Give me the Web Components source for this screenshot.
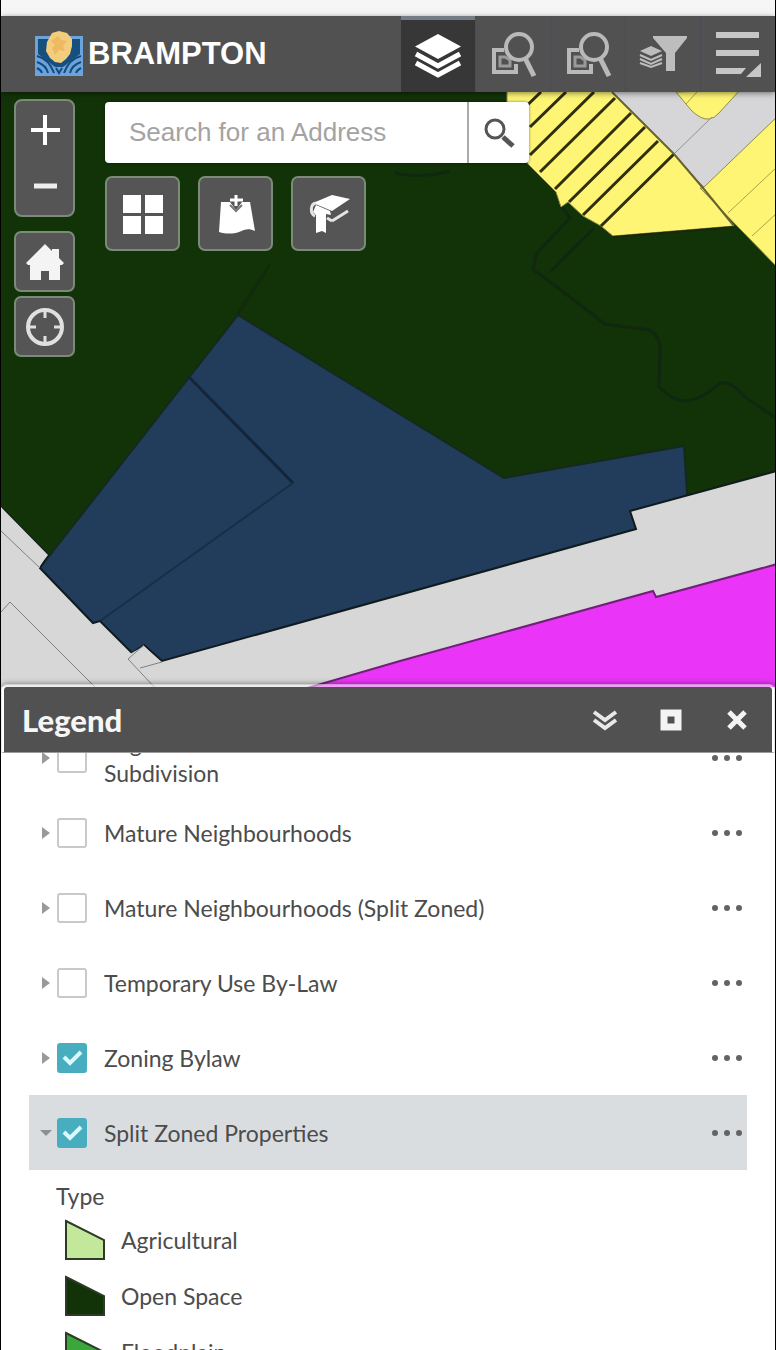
<!DOCTYPE html>
<html lang="en">
<head>
<meta charset="utf-8">
<meta name="viewport" content="width=device-width, initial-scale=1">
<title>Brampton Zoning Map</title>
<style>
  body {
    margin: 0;
    background: #fff;
    font-family: Lato, "Open Sans", sans-serif;
    font-size: 23px;
    color: #4c4c4c;
  }
</style>
</head>
<body>
<map-app>
  <app-header slot="header">
    <header-tool icon="layers" label="Legend" active></header-tool>
    <header-tool icon="find" label="Property search"></header-tool>
    <header-tool icon="find" label="Zoning search"></header-tool>
    <header-tool icon="filter" label="Filter"></header-tool>
    <header-tool icon="menu" label="More"></header-tool>
  </app-header>
  <map-view slot="map">
    <map-button slot="nav" icon="home" label="Home"></map-button>
    <map-button slot="nav" icon="locate" label="My location"></map-button>
    <address-search slot="search"></address-search>
    <map-button slot="tools" size="large" icon="grid" label="Basemaps"></map-button>
    <map-button slot="tools" size="large" icon="share" label="Add data"></map-button>
    <map-button slot="tools" size="large" icon="book" label="Bookmarks"></map-button>
  </map-view>
  <legend-panel slot="panel" heading="Legend">
    <layer-row>Registered Plan of<br>Subdivision</layer-row>
    <layer-row>Mature Neighbourhoods</layer-row>
    <layer-row>Mature Neighbourhoods (Split Zoned)</layer-row>
    <layer-row>Temporary Use By-Law</layer-row>
    <layer-row checked>Zoning Bylaw</layer-row>
    <layer-row checked open>Split Zoned Properties</layer-row>
    <legend-group heading="Type">
      <legend-item color="#c3e89b">Agricultural</legend-item>
      <legend-item color="#123308">Open Space</legend-item>
      <legend-item color="#3ba73b">Floodplain</legend-item>
    </legend-group>
  </legend-panel>
</map-app>

<script>
const icons = {
  layers: `<svg width="48" height="48" viewBox="0 0 48 48"><path fill="#fff" d="M24 2 47 14.500 24 27 1 14.500z"/><path fill="none" stroke="#fff" stroke-width="5" d="M2 22 24 34 46 22M2 31 24 43 46 31"/></svg>`,
  find: `<svg width="48" height="48" viewBox="0 0 48 48" fill="none" stroke="#b9b9b9"><path stroke-width="4" d="M15 20H5v22h22v-8"/><path stroke-width="3" d="M11 27h5l5 3v6h-10z" opacity=".7"/><circle cx="30" cy="17" r="13" stroke-width="4"/><path stroke-width="5" d="M36 28 45 46"/></svg>`,
  filter: `<svg width="48" height="48" viewBox="0 0 48 48"><path fill="#bdbdbd" d="M14 6h34v2L36 23v18h-9V23L14 8z"/><path fill="#bdbdbd" d="m12 16 11 5-11 5-11-5z"/><path fill="none" stroke="#bdbdbd" stroke-width="2" d="m1 25 11 5 11-5M1 29l11 5 11-5M1 33l11 4 11-4"/></svg>`,
  menu: `<svg width="48" height="48" viewBox="0 0 48 48" fill="#c6c6c6"><path d="M2 2h43v6H2zM2 20h43v6H2zM2 38h30l-5 6H2zM47 33v14H32z"/></svg>`,
  plus: `<svg width="32" height="32" viewBox="0 0 32 32"><path stroke="#fff" stroke-width="4" d="M2 16h29M16 1v30"/></svg>`,
  minus: `<svg width="32" height="32" viewBox="0 0 32 32"><path stroke="#eee" stroke-width="5" d="M5 16h23"/></svg>`,
  home: `<svg width="40" height="40" viewBox="0 0 40 40"><path fill="#f4f4f4" d="M20 2 27 9V7h7v9l5 5-2 2h-2v15H24v-9h-8v9H5V23H3l-2-2z"/></svg>`,
  locate: `<svg width="40" height="40" viewBox="0 0 40 40" fill="none" stroke="#e0e0e0"><circle cx="20" cy="20" r="17" stroke-width="4"/><path stroke-width="3" d="M20 4v7M20 29v7M4 20h7M29 20h7"/></svg>`,
  grid: `<svg width="42" height="42" viewBox="0 0 42 42" fill="#fff"><path d="M1 2h18v18H1zM23 2h18v18H23zM1 23h18v18H1zM23 23h18v18H23z"/></svg>`,
  share: `<svg width="42" height="42" viewBox="0 0 42 42"><path fill="#fff" d="M6 9h9l6 8 6-8h8l5 29c-6-3-10-2-16 1-6 2-13 2-20 0z"/><path fill="none" stroke="#fff" stroke-width="3" d="M15 7h13M21 2v11"/><path fill="none" stroke="#777" stroke-width="2" d="m15 12 6 6 6-6"/></svg>`,
  book: `<svg width="42" height="42" viewBox="0 0 42 42"><path fill="#fff" d="M5 10 24 2l18 4-18 12z"/><path fill="none" stroke="#e4e4e4" stroke-width="3" d="M8 10c-6 1-6 11-1 13M24 28l16-10M19 25l5 3"/><path fill="#fff" d="m8 12 14 6 1 4-5-1v19l-4-2-6 2V22l-3-3z"/></svg>`,
  search: `<svg width="32" height="32" viewBox="0 0 32 32" fill="none" stroke="#555"><circle cx="12" cy="12" r="9" stroke-width="3"/><path stroke-width="5" d="m20 20 10 9"/></svg>`,
  collapse: `<svg width="26" height="22" viewBox="0 0 26 22" fill="none" stroke="#e8e8e8" stroke-width="4"><path d="m2 3 11 8 11-8M2 11l11 8 11-8"/></svg>`,
  maximize: `<svg width="22" height="22" viewBox="0 0 22 22"><path fill="none" stroke="#f4f4f4" stroke-width="7" d="M4 4h14v14H4z"/></svg>`,
  close: `<svg width="22" height="22" viewBox="0 0 22 22"><path stroke="#f4f4f4" stroke-width="5" d="m3 3 16 16M19 3 3 19"/></svg>`,
  right: `<svg width="10" height="14" viewBox="0 0 10 14"><path fill="#999" d="m1 1 8 6-8 6z"/></svg>`,
  down: `<svg width="12" height="8" viewBox="0 0 12 8"><path fill="#8d9092" d="M0 1h12L6 7z"/></svg>`,
  dots: `<svg width="32" height="8" viewBox="0 0 32 8" fill="#636363"><circle cx="4" cy="4" r="3"/><circle cx="16" cy="4" r="3"/><circle cx="28" cy="4" r="3"/></svg>`
};

const resets = `
  * { box-sizing: border-box; }
  svg { display: block; flex: none; }
  button {
    display: flex;
    align-items: center;
    justify-content: center;
    margin: 0;
    padding: 0;
    border: 0;
    background: none;
    cursor: pointer;
  }
`;

class MapApp extends HTMLElement {
  constructor() {
    super();
    this.attachShadow({ mode: "open" });
    this.shadowRoot.innerHTML = `
    <style>
      :host {
        box-sizing: border-box;
        display: flex;
        flex-direction: column;
        height: 100vh;
        border: solid #000;
        border-width: 0 1px;
        overflow: hidden;
      }
      .strip {
        flex: none;
        height: 16px;
        background: linear-gradient(#f6f6f6 70%, #fff);
      }
      ::slotted([slot="map"]) { flex: 592 1 0; min-height: 0; }
      ::slotted([slot="panel"]) { flex: 666 1 0; min-height: 0; }
    </style>
    <div class="strip"></div>
    <slot name="header"></slot>
    <slot name="map"></slot>
    <slot name="panel"></slot>
    `;
  }
}

class AppHeader extends HTMLElement {
  constructor() {
    super();
    this.attachShadow({ mode: "open" });
    this.shadowRoot.innerHTML = `
    <style>
      ${resets}
      :host {
        position: relative;
        z-index: 1;
        flex: none;
        display: flex;
        justify-content: space-between;
        height: 76px;
        background: #515151;
        box-shadow: 0 1px 6px rgba(0, 0, 0, .5);
      }
      .brand {
        display: flex;
        align-items: center;
        gap: 5px;
        padding-left: 34px;
        color: #fff;
        font: bold 31px/48px "Liberation Sans", sans-serif;
        text-decoration: none;
      }
      nav { display: flex; gap: 1px; background: #484c53; }
    </style>
    <a class="brand" href="#">
      <svg width="48" height="46" viewBox="0 0 48 46">
        <path fill="#6ba3dc" d="M0 5h48v40H0z"/>
        <path fill="#17507f" d="M3 8h42v15L28 36h-8L3 23z"/>
        <path fill="none" stroke="#174a7c" stroke-width="2" d="M2 25q12 3 17 17M2 31q9 3 11 11M2 37q4 2 5 5M46 25q-12 3-17 17M46 31q-9 3-11 11M46 37q-4 2-5 5M21 37l3 5 3-5"/>
        <path fill="#f4cd7c" d="M17 2 24 0l8 2 5 6v7l-2 8-4 5-5 4-6-1-5-4-4-7 1-9z"/>
        <path fill="#e7ae4f" d="m16 10 7-5 3 4 6 1-4 5 2 5-6-1-4 5-3-7 3-3z" opacity=".6"/>
      </svg>
      <span>BRAMPTON</span>
    </a>
    <nav><slot></slot></nav>
    `;
  }
}

class HeaderTool extends HTMLElement {
  constructor() {
    super();
    this.attachShadow({ mode: "open" });
  }

  connectedCallback() {
    this.shadowRoot.innerHTML = `
    <style>
      ${resets}
      :host { display: block; width: 74px; background: #515151; }
      button { width: 100%; height: 100%; }
      :host([active]) { background: #373737; }
      :host([active]) button { border-top: 4px solid #747d86; }
    </style>
    <button type="button" aria-label="${this.getAttribute("label")}">${icons[this.getAttribute("icon")]}</button>
    `;
  }
}

class MapView extends HTMLElement {
  constructor() {
    super();
    this.attachShadow({ mode: "open" });
    this.shadowRoot.innerHTML = `
    <style>
      ${resets}
      :host { position: relative; display: block; background: #123308; }
      .canvas { position: absolute; top: 0; left: 0; width: 100%; height: calc(100% + 3px); }
      .controls { position: relative; display: flex; gap: 30px; padding: 7px 13px; }
      .nav { display: flex; flex-direction: column; gap: 4px; }
      .zoom {
        width: 61px;
        height: 118px;
        margin-bottom: 10px;
        padding: 1px 0;
        border: 2px solid #7c8a7a;
        border-radius: 8px;
        background: #555;
      }
      .zoom button { width: 100%; height: 56px; }
      .main { flex: 1; padding-top: 3px; }
      .tools { display: flex; gap: 18px; padding-top: 13px; }
    </style>
    <svg class="canvas" viewBox="1 92 774 595" preserveAspectRatio="xMidYMid slice" aria-hidden="true">
      <path fill="#123308" d="M0 90h776v600H0z"/>
      <!-- creeks -->
      <g fill="none" stroke="#10280f" stroke-width="3">
        <path d="m561 206 9 12-34 36-3 16 12 8 60 46 45 6q12 8 10 25l-1 32q14 14 28 14 16-2 33-18 12-2 26 15l30 20"/>
        <path d="m594 228-43 43"/>
        <path d="m238 314 32-50" stroke="#112b0b"/>
        <path d="m395 173q25 6 55-2"/>
      </g>
      <!-- institutional parcels -->
      <path fill="#213d5b" stroke="#15291f" stroke-width="2" d="M238 315 504 478 684 446 687 494 657 544 162 680 120 665 32 578z"/>
      <path fill="none" stroke="#14253b" stroke-width="3" d="m188 376 105 107"/>
      <path fill="none" stroke="#182e48" stroke-width="2" d="M293 483 100 621"/>
      <!-- roads -->
      <path fill="#d7d7d7" stroke="#101b20" stroke-width="2" d="m-5 501 53 54-8 13 53 55 7-2 32 32 12-8 18 16 474-132-6-18 150-41v230H-5z"/>
      <path fill="#d7d7d7" d="m-5 501 53 54-10 13zM98 622l32 32 14-8 17 16-20 8z"/>
      <g fill="none" stroke="#808080" stroke-width="1">
        <path d="m1 531 39 37M1 612l9-10 88 88M128 659l29 31M128 659l16-14M140 668l22-6"/>
      </g>
      <path fill="#ea35f8" stroke="#712078" stroke-width="2" d="m290 693 110-32 253-70 3 6 125-34v140H290z"/>
      <!-- residential lots -->
      <path fill="#d6d6d9" d="M600 88h180v100h-75z"/>
      <path fill="#fdf573" stroke="#8f8b48" stroke-width="1" d="M507 90h103l64 64 30 34 30 38-121 10-12-10-18-10-15-14-7 5-5-15-28-28-21-51z"/>
      <path fill="none" stroke="#2f2e0d" stroke-width="3" d="m541 92-26 25M566 92l-36 35M594 92l-64 63M615 98l-75 74M631 113l-76 76M645 127l-76 75M658 141l-75 74M674 154l-73 72"/>
      <path fill="none" stroke="#18280a" stroke-width="2" d="m613 237 121-10"/>
      <path fill="#fdf573" stroke="#8f8b48" stroke-width="1" d="m703 188 77-74v156l-80-82zM676 92l15 18q10 10 18 9 6-1 10-6l21-23z"/>
      <path fill="none" stroke="#aaa446" stroke-width="1" d="m728 213 49-46M752 236l25-23M697 92l-11 12"/>
      <path fill="none" stroke="#91918b" stroke-width="1" d="m712 117-37 36"/>
      <path fill="none" stroke="#66632e" stroke-width="2" d="m612 92 62 62 29 34 31 38"/>
    </svg>
    <div class="controls">
      <div class="nav">
        <div class="zoom">
          <button type="button" aria-label="Zoom in">${icons.plus}</button>
          <button type="button" aria-label="Zoom out">${icons.minus}</button>
        </div>
        <slot name="nav"></slot>
      </div>
      <div class="main">
        <slot name="search"></slot>
        <div class="tools"><slot name="tools"></slot></div>
      </div>
    </div>
    `;
  }
}

class MapButton extends HTMLElement {
  constructor() {
    super();
    this.attachShadow({ mode: "open" });
  }

  connectedCallback() {
    this.shadowRoot.innerHTML = `
    <style>
      ${resets}
      :host { display: block; width: 61px; height: 61px; }
      :host([size="large"]) { width: 75px; height: 75px; }
      button {
        width: 100%;
        height: 100%;
        border: 2px solid #7c8a7a;
        border-radius: 7px;
        background: #555;
      }
    </style>
    <button type="button" aria-label="${this.getAttribute("label")}">${icons[this.getAttribute("icon")]}</button>
    `;
  }
}

class AddressSearch extends HTMLElement {
  constructor() {
    super();
    this.attachShadow({ mode: "open" });
    this.shadowRoot.innerHTML = `
    <style>
      ${resets}
      :host { display: block; }
      form {
        display: flex;
        width: 100%;
        max-width: 424px;
        height: 61px;
        border-radius: 4px;
        background: #fff;
        box-shadow: 0 0 3px rgba(0, 0, 0, .5);
      }
      input {
        flex: 1;
        min-width: 0;
        padding: 0 24px;
        border: 0;
        outline: 0;
        background: none;
        font: 26px "Liberation Sans", sans-serif;
        color: #444;
      }
      input::placeholder { color: #a3a3a3; opacity: 1; }
      button { width: 62px; border-left: 2px solid #aaa; }
    </style>
    <form>
      <input type="text" placeholder="Search for an Address" aria-label="Search for an Address">
      <button type="button" aria-label="Search">${icons.search}</button>
    </form>
    `;
  }
}

class LegendPanel extends HTMLElement {
  constructor() {
    super();
    this.attachShadow({ mode: "open" });
  }

  connectedCallback() {
    this.shadowRoot.innerHTML = `
    <style>
      ${resets}
      :host { position: relative; display: flex; flex-direction: column; }
      header {
        flex: none;
        display: flex;
        align-items: center;
        justify-content: space-between;
        height: 69px;
        padding: 0 20px 0 18px;
        border: 3px solid rgba(255, 255, 255, .5);
        border-bottom: 1px solid #999;
        border-radius: 6px 6px 0 0;
        background: #515151;
        background-clip: padding-box;
        box-shadow: 0 -1px 5px rgba(0, 0, 0, .35);
      }
      h2 { margin: 0; font-size: 31px; line-height: 36px; font-weight: 900; color: #f6f6f6; }
      .actions { display: flex; gap: 36px; }
      .actions button { width: 30px; height: 36px; }
      .body {
        flex: 1;
        min-height: 0;
        padding: 0 28px 24px;
        overflow-y: auto;
        scrollbar-width: none;
        background: #fff;
      }
    </style>
    <header>
      <h2>${this.getAttribute("heading")}</h2>
      <div class="actions">
        <button type="button" aria-label="Collapse">${icons.collapse}</button>
        <button type="button" aria-label="Maximize">${icons.maximize}</button>
        <button type="button" aria-label="Close">${icons.close}</button>
      </div>
    </header>
    <div class="body"><slot></slot></div>
    `;
  }

  scrollList(top) {
    this.shadowRoot.querySelector(".body").scrollTop = top;
  }
}

class LayerRow extends HTMLElement {
  constructor() {
    super();
    this.attachShadow({ mode: "open" });
  }

  connectedCallback() {
    const open = this.hasAttribute("open");
    this.shadowRoot.innerHTML = `
    <style>
      ${resets}
      :host { display: block; }
      .row {
        display: flex;
        align-items: center;
        height: 75px;
        padding: 0 4px 0 10px;
      }
      :host([open]) .row { background: #dadde0; }
      .toggle { width: 14px; height: 30px; margin-right: 4px; }
      label { flex: 1; display: flex; align-items: center; gap: 17px; line-height: 30px; }
      input {
        flex: none;
        appearance: none;
        width: 30px;
        height: 30px;
        margin: 0;
        border: 2px solid #c9c9c9;
        border-radius: 3px;
        background: #fff;
      }
      input:checked {
        border-color: #49adc0;
        background: #49adc0 url('data:image/svg+xml,<svg xmlns="http://www.w3.org/2000/svg" viewBox="0 0 26 26"><path d="m5 12 6 6L22 7" fill="none" stroke="%23d9fbff" stroke-width="4"/></svg>');
      }
    </style>
    <div class="row">
      <button class="toggle" type="button" aria-label="Expand" aria-expanded="${open}">${open ? icons.down : icons.right}</button>
      <label>
        <input type="checkbox" ${this.hasAttribute("checked") ? "checked" : ""}>
        <span><slot></slot></span>
      </label>
      <button type="button" aria-label="Layer options">${icons.dots}</button>
    </div>
    `;
  }
}

class LegendGroup extends HTMLElement {
  constructor() {
    super();
    this.attachShadow({ mode: "open" });
  }

  connectedCallback() {
    this.shadowRoot.innerHTML = `
    <style>
      :host { display: block; padding: 10px 0 0 27px; }
      div { line-height: 32px; }
    </style>
    <div>${this.getAttribute("heading")}</div>
    <slot></slot>
    `;
  }
}

class LegendItem extends HTMLElement {
  constructor() {
    super();
    this.attachShadow({ mode: "open" });
  }

  connectedCallback() {
    this.shadowRoot.innerHTML = `
    <style>
      :host { display: flex; align-items: center; gap: 15px; height: 56px; padding-left: 8px; }
      svg { flex: none; }
    </style>
    <svg width="42" height="42" viewBox="0 0 42 42"><path d="M2 2 40 21v19H2z" fill="${this.getAttribute("color")}" stroke="#2c3a26" stroke-width="2"/></svg>
    <span><slot></slot></span>
    `;
  }
}

customElements.define("map-app", MapApp);
customElements.define("app-header", AppHeader);
customElements.define("header-tool", HeaderTool);
customElements.define("map-view", MapView);
customElements.define("map-button", MapButton);
customElements.define("address-search", AddressSearch);
customElements.define("legend-panel", LegendPanel);
customElements.define("layer-row", LayerRow);
customElements.define("legend-group", LegendGroup);
customElements.define("legend-item", LegendItem);

document.querySelector("legend-panel").scrollList(33);
</script>
</body>
</html>
